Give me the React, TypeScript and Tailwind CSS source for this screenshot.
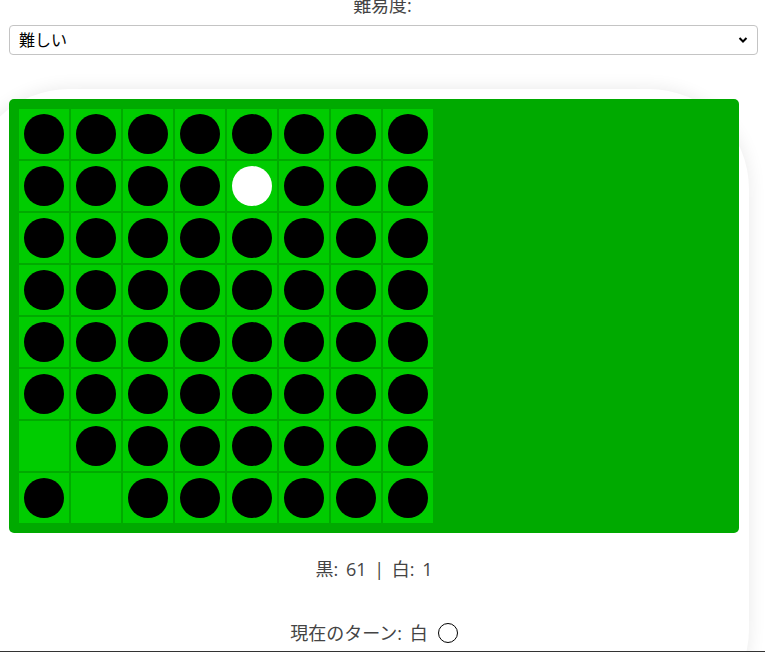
import React from "react";

// 0 = empty, 1 = black, 2 = white
const board: number[][] = [
  [1, 1, 1, 1, 1, 1, 1, 1],
  [1, 1, 1, 1, 2, 1, 1, 1],
  [1, 1, 1, 1, 1, 1, 1, 1],
  [1, 1, 1, 1, 1, 1, 1, 1],
  [1, 1, 1, 1, 1, 1, 1, 1],
  [1, 1, 1, 1, 1, 1, 1, 1],
  [0, 1, 1, 1, 1, 1, 1, 1],
  [1, 0, 1, 1, 1, 1, 1, 1],
];

const Cell = ({ value }: { value: number }) => (
  <div className="w-[50px] h-[50px] bg-[#00cc00] flex items-center justify-center">
    {value === 1 && <div className="w-10 h-10 rounded-full bg-black" />}
    {value === 2 && <div className="w-10 h-10 rounded-full bg-white" />}
  </div>
);

const App = () => {
  const black = board.flat().filter((v) => v === 1).length;
  const white = board.flat().filter((v) => v === 2).length;

  return (
    <div
      className="px-[9px] overflow-hidden h-[652px] text-[#444]"
      style={{ fontFamily: '"Open Sans", "Noto Sans CJK JP", sans-serif' }}
    >
      {/* difficulty */}
      <div className="text-center text-[18px] leading-[26px] mt-[-8px]">難易度:</div>
      <div className="relative mt-[7px]">
        <select
          defaultValue="hard"
          className="w-[749px] h-[30px] appearance-none border border-[#c4c4c4] rounded-[4px] bg-white pl-[9px] text-base text-black outline-none"
        >
          <option value="easy">簡単</option>
          <option value="normal">普通</option>
          <option value="hard">難しい</option>
        </select>
        <svg
          className="absolute right-[8px] top-[11px] pointer-events-none"
          width="10"
          height="8"
          viewBox="0 0 10 8"
        >
          <path d="M1.5 2 L5 5.5 L8.5 2" fill="none" stroke="#000" strokeWidth="2" />
        </svg>
      </div>

      {/* card */}
      <div className="mt-[34px] ml-[-40px] w-[780px] h-[640px] bg-white rounded-[100px] shadow-[0_0_18px_rgba(0,0,0,0.09)] pt-[10px] pl-[40px] pr-[10px]">
        <div className="w-[730px] bg-[#00aa00] rounded-[5px] p-[10px]">
          <div className="grid grid-cols-[repeat(8,50px)] gap-[2px] w-fit">
            {board.map((row, r) =>
              row.map((v, c) => <Cell key={`${r}-${c}`} value={v} />)
            )}
          </div>
        </div>

        <p className="text-center text-[18px] leading-[26px] mt-[23px] [word-spacing:3px]">
          黒: {black} | 白: {white}
        </p>
        <p className="text-center text-[18px] leading-[26px] mt-[38px] flex items-center justify-center gap-[10px] [word-spacing:3px]">
          <span>現在のターン: 白</span>
          <span className="inline-block w-[20px] h-[20px] rounded-full border-[1.5px] border-black bg-white" />
        </p>
      </div>

      <div className="fixed left-0 right-0 bottom-0 h-px bg-[#333]" />
    </div>
  );
};

export default App;
